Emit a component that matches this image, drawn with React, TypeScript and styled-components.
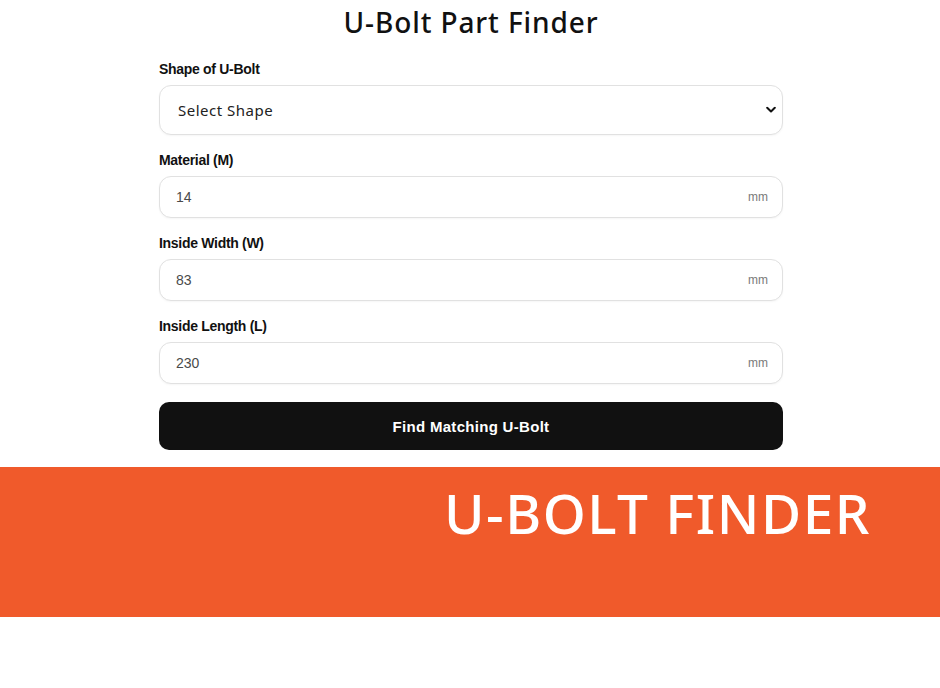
import { createGlobalStyle } from 'styled-components';
import styled from 'styled-components';

const GlobalStyle = createGlobalStyle`
  body {
    margin: 0;
    background: #fff;
    font-family: 'Liberation Sans', Arial, sans-serif;
  }
`;

const Page = styled.div`
  display: flex;
  flex-direction: column;
  align-items: center;
  padding-top: 6px;
`;

const Title = styled.h1`
  margin: 0 0 0 2px;
  font-family: 'Noto Sans', sans-serif;
  font-weight: 500;
  font-size: 28px;
  line-height: 32px;
  letter-spacing: 0.9px;
  color: #111;
`;

const Form = styled.form`
  display: flex;
  flex-direction: column;
  gap: 17px;
  width: 624px;
  margin: 23px 0 0 2px;
`;

const Field = styled.div`
  display: flex;
  flex-direction: column;
  gap: 8px;
`;

const Label = styled.label`
  font-size: 14px;
  line-height: 16px;
  font-weight: 700;
  color: #111;
  letter-spacing: -0.3px;
`;

const Control = styled.div<{ tall?: boolean }>`
  position: relative;
  display: flex;
  align-items: center;
  height: ${(p) => (p.tall ? '50px' : '42px')};
  box-sizing: border-box;
  border: 1px solid #e1e1e1;
  border-radius: 12px;
  box-shadow: 0 1px 2px rgba(0, 0, 0, 0.04);
  background: #fff;
`;

const Select = styled.select`
  appearance: none;
  width: 100%;
  height: 100%;
  border: none;
  background: transparent;
  padding: 0 18px;
  font-family: 'Noto Sans', sans-serif;
  font-size: 15px;
  letter-spacing: 0.5px;
  color: #222;
  border-radius: 12px;
  outline: none;
`;

const Chevron = styled.svg`
  position: absolute;
  right: 6px;
  top: 50%;
  transform: translateY(-50%);
  pointer-events: none;
`;

const Input = styled.input`
  flex: 1;
  border: none;
  background: transparent;
  padding: 0 16px;
  font-family: 'Liberation Sans', Arial, sans-serif;
  font-size: 14px;
  color: #4a4a4a;
  outline: none;
  min-width: 0;
`;

const Unit = styled.span`
  padding-right: 14px;
  font-size: 12px;
  color: #7a7a7a;
`;

const Button = styled.button`
  margin-top: 1px;
  height: 48px;
  border: none;
  border-radius: 10px;
  background: #111;
  color: #fff;
  font-family: 'Liberation Sans', Arial, sans-serif;
  font-weight: 700;
  font-size: 15px;
  letter-spacing: 0.3px;
`;

const Banner = styled.div`
  align-self: stretch;
  margin-top: 17px;
  height: 150px;
  background: #f05a2b;
  padding-left: 444px;
  box-sizing: border-box;
`;

const BannerText = styled.div`
  margin-top: 14px;
  font-family: 'Noto Sans', sans-serif;
  font-weight: 500;
  font-size: 55px;
  line-height: 64px;
  color: #fff;
  letter-spacing: 1.5px;
`;

type Dim = { label: string; value: string };

const dims: Dim[] = [
  { label: 'Material (M)', value: '14' },
  { label: 'Inside Width (W)', value: '83' },
  { label: 'Inside Length (L)', value: '230' },
];

export default function App() {
  return (
    <>
      <GlobalStyle />
      <Page>
        <Title>U-Bolt Part Finder</Title>
        <Form onSubmit={(e) => e.preventDefault()}>
          <Field>
            <Label>Shape of U-Bolt</Label>
            <Control tall>
              <Select defaultValue="">
                <option value="">Select Shape</option>
                <option value="round">Round</option>
                <option value="square">Square</option>
              </Select>
              <Chevron width="10" height="7" viewBox="0 0 10 7">
                <path d="M1.2 1.2 5 5 8.8 1.2" fill="none" stroke="#111" strokeWidth="2" strokeLinecap="round" strokeLinejoin="round" />
              </Chevron>
            </Control>
          </Field>
          {dims.map((d) => (
            <Field key={d.label}>
              <Label>{d.label}</Label>
              <Control>
                <Input defaultValue={d.value} />
                <Unit>mm</Unit>
              </Control>
            </Field>
          ))}
          <Button type="submit">Find Matching U-Bolt</Button>
        </Form>
        <Banner>
          <BannerText>U-BOLT FINDER</BannerText>
        </Banner>
      </Page>
    </>
  );
}
